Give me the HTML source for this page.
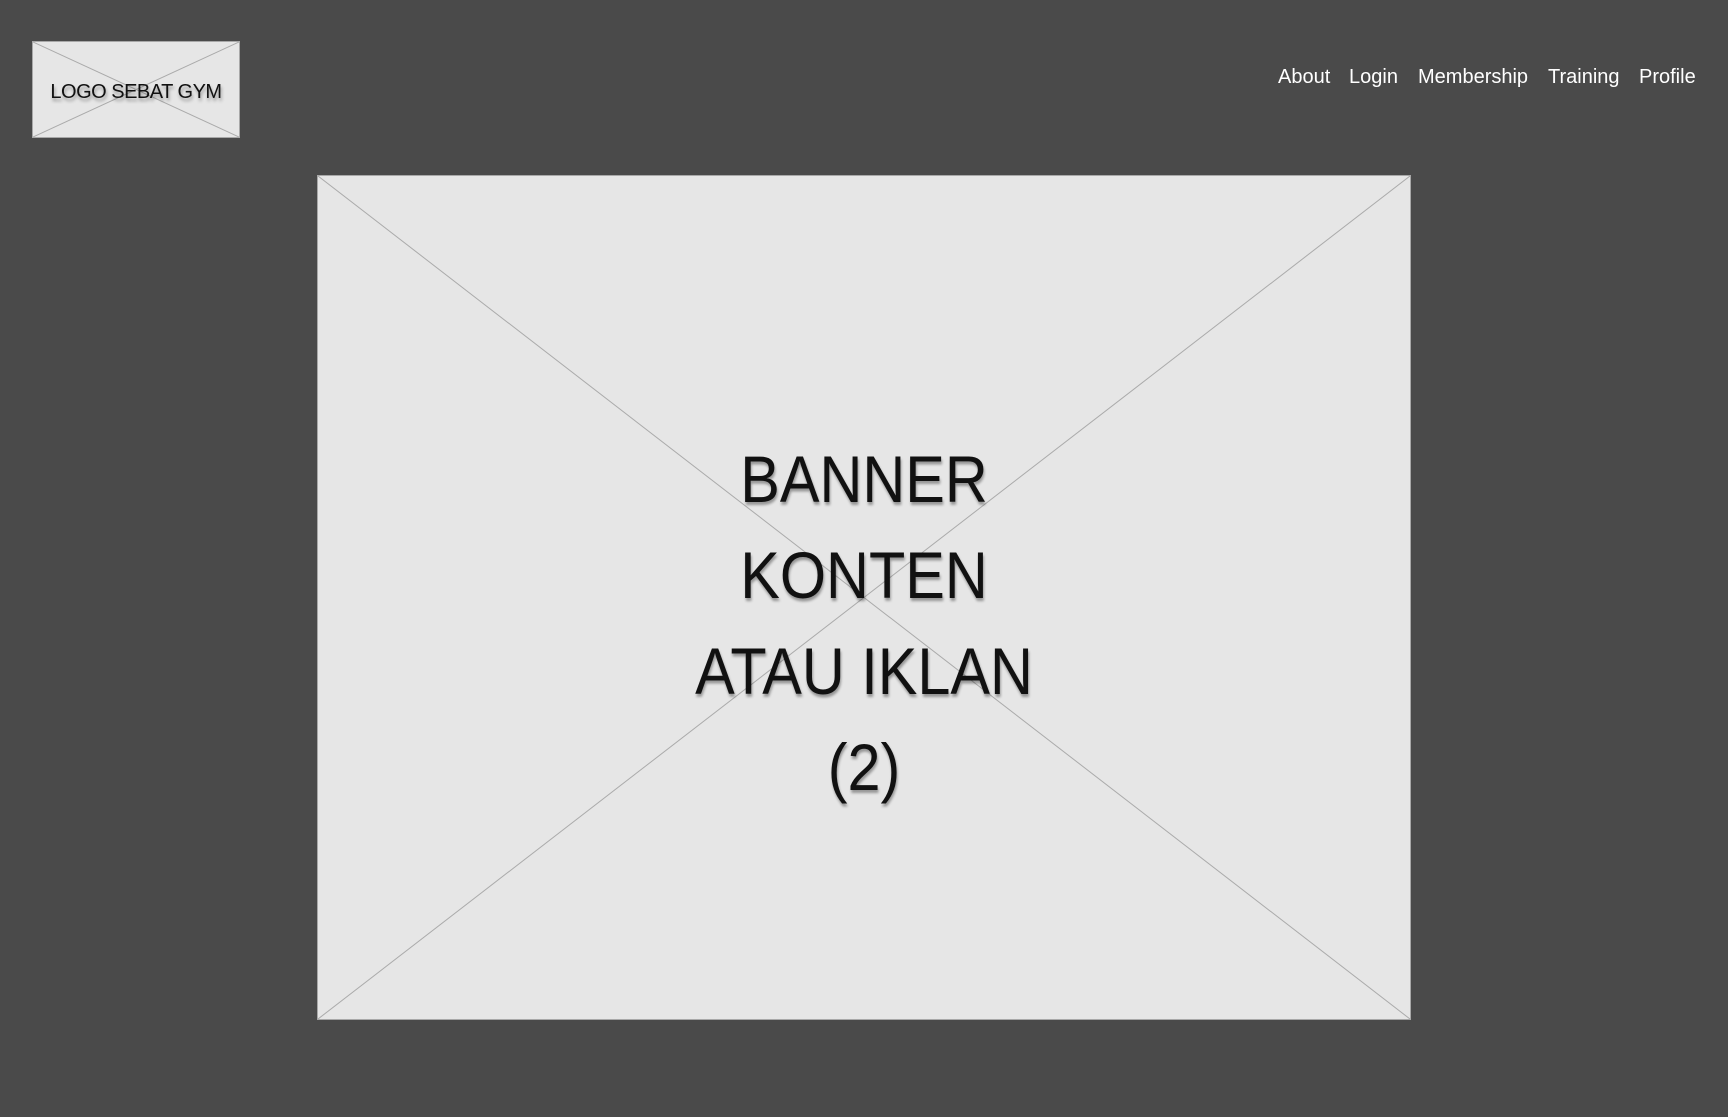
<!DOCTYPE html>
<html><head><meta charset="utf-8"><style>
html,body{margin:0;padding:0;width:1728px;height:1117px;background:#4a4a4a;overflow:hidden;font-family:"Liberation Sans",sans-serif}
.box{position:absolute;background:#e6e6e6;border:1px solid #a8a8a8;box-sizing:border-box}
.box svg{position:absolute;left:0;top:0;width:100%;height:100%}
.t{position:absolute;left:0;right:0;text-align:center;color:#111;text-shadow:1px 3px 3px rgba(0,0,0,.35)}
.nav{position:absolute;top:66px;color:#fff;font-size:20px}
</style></head><body>
<div class="box" style="left:32px;top:41px;width:208px;height:97px">
<svg viewBox="0 0 208 97" preserveAspectRatio="none"><line x1="0" y1="0" x2="208" y2="97" stroke="#aaa" stroke-width="1"/><line x1="208" y1="0" x2="0" y2="97" stroke="#aaa" stroke-width="1"/></svg>
<div class="t" style="top:39px;font-size:20px;letter-spacing:-0.5px;">LOGO SEBAT GYM</div>
</div>
<span class="nav" style="left:1278px">About</span>
<span class="nav" style="left:1349px">Login</span>
<span class="nav" style="left:1418px">Membership</span>
<span class="nav" style="left:1548px">Training</span>
<span class="nav" style="left:1639px">Profile</span>
<div class="box" style="left:317px;top:175px;width:1094px;height:845px">
<svg viewBox="0 0 1094 845" preserveAspectRatio="none"><line x1="0" y1="0" x2="1094" y2="845" stroke="#aaa" stroke-width="1"/><line x1="1094" y1="0" x2="0" y2="845" stroke="#aaa" stroke-width="1"/></svg>
<div class="t" style="top:255px;font-size:66px;line-height:96px;transform:scaleX(0.9);transform-origin:center">BANNER<br>KONTEN<br>ATAU IKLAN<br>(2)</div>
</div>
</body></html>
